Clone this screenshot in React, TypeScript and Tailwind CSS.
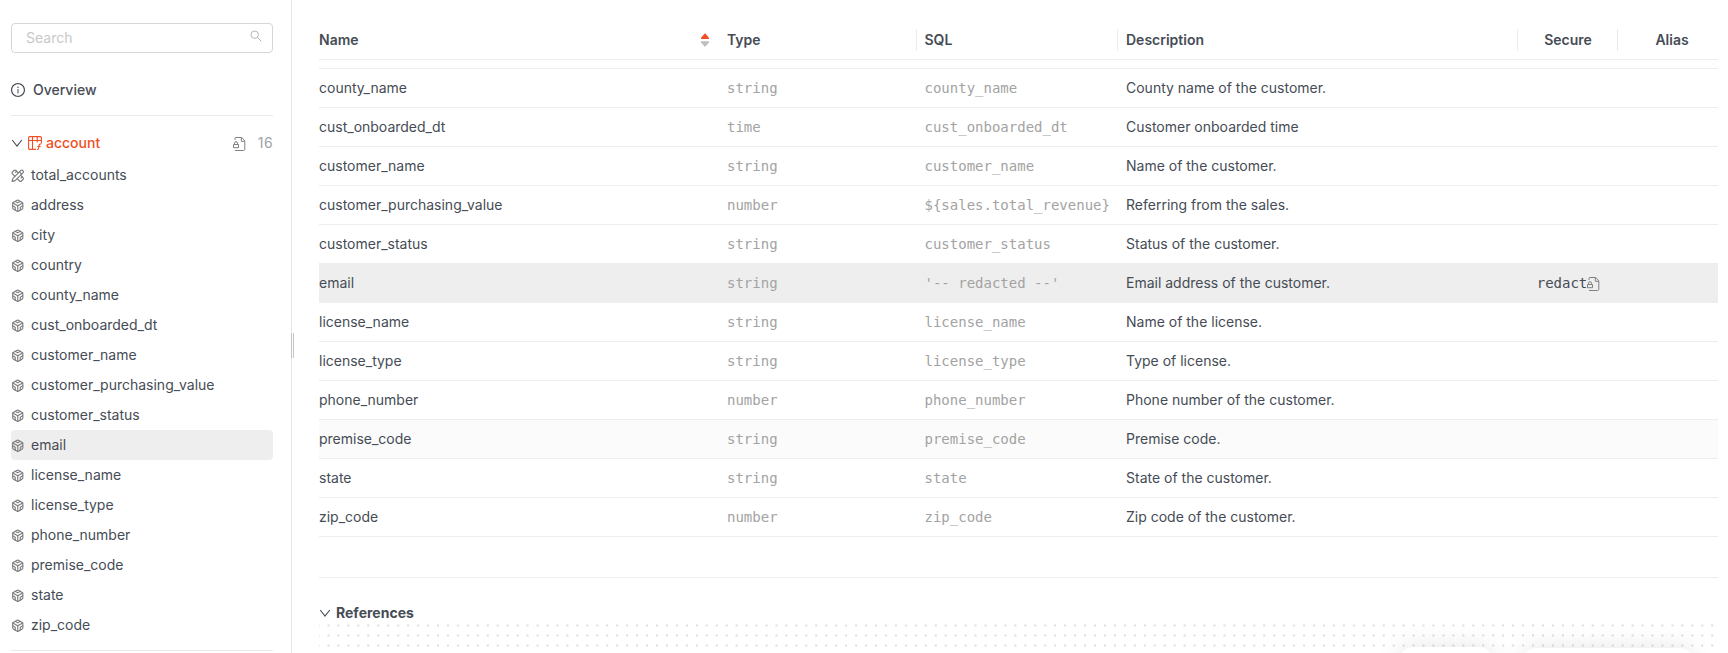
import React from "react";
import { Codesandbox, PencilRuler } from "lucide-react";
import { AiOutlineInfoCircle } from "react-icons/ai";

const measures = ["total_accounts"];
const dimensions = [
  "address", "city", "country", "county_name", "cust_onboarded_dt", "customer_name",
  "customer_purchasing_value", "customer_status", "email", "license_name", "license_type",
  "phone_number", "premise_code", "state", "zip_code",
];

type Row = { name: string; type: string; sql: string; desc: string; secure?: string; tone?: string };
const rows: Row[] = [
  { name: "county_name", type: "string", sql: "county_name", desc: "County name of the customer." },
  { name: "cust_onboarded_dt", type: "time", sql: "cust_onboarded_dt", desc: "Customer onboarded time" },
  { name: "customer_name", type: "string", sql: "customer_name", desc: "Name of the customer." },
  { name: "customer_purchasing_value", type: "number", sql: "${sales.total_revenue}", desc: "Referring from the sales." },
  { name: "customer_status", type: "string", sql: "customer_status", desc: "Status of the customer." },
  { name: "email", type: "string", sql: "'-- redacted --'", desc: "Email address of the customer.", secure: "redact", tone: "bg-[#eeeeee]" },
  { name: "license_name", type: "string", sql: "license_name", desc: "Name of the license." },
  { name: "license_type", type: "string", sql: "license_type", desc: "Type of license." },
  { name: "phone_number", type: "number", sql: "phone_number", desc: "Phone number of the customer." },
  { name: "premise_code", type: "string", sql: "premise_code", desc: "Premise code.", tone: "bg-[#fbfbfb]" },
  { name: "state", type: "string", sql: "state", desc: "State of the customer." },
  { name: "zip_code", type: "number", sql: "zip_code", desc: "Zip code of the customer." },
];

const COLS = "grid grid-cols-[400px_197.5px_201.500px_400px_100px_100px]";
const MONO = "font-['DejaVu_Sans_Mono',monospace]";

function Chevron() {
  return (
    <svg width="12" height="12" viewBox="0 0 12 12" fill="none" stroke="currentColor" strokeWidth="1.1" className="shrink-0">
      <path d="M1.200 3 6 9l4.800-6" />
    </svg>
  );
}

function SecureDoc() {
  return (
    <svg width="13" height="14" viewBox="0 0 13 14" fill="none" stroke="currentColor" strokeWidth="1" className="shrink-0 text-[#808080]">
      <path d="M2 3V1.500a1 1 0 0 1 1-1h5.800L11.800 3.800v8.400a1.300 1.300 0 0 1-1.300 1.300H2" />
      <path d="M8.300.8v3.500h3.300" />
      <path d="M.5 7.500h5v3.200H.5zM1.500 7.300V6.200a1.500 1.500 0 0 1 3 0v1.100" />
    </svg>
  );
}

function TableFx() {
  return (
    <svg width="14" height="14" viewBox="0 0 14 14" fill="none" stroke="currentColor" strokeWidth="1.1" className="shrink-0">
      <path d="M8 13.400H1.800A1.200 1.200 0 0 1 .6 12.200V1.800A1.200 1.200 0 0 1 1.800.6h10.400a1.200 1.200 0 0 1 1.200 1.200v5.700M.6 4.500h12.800M4.500.6v12.800M9.200.6v6" />
      <path d="M13.200 8.100c-1.400-.4-1.900.2-2.100 1.300l-.5 2.800c-.2 1-.6 1.400-1.500 1.200M9.400 10.500h3.200" />
    </svg>
  );
}

function SideItem({ label, kind }: { label: string; kind: "measure" | "dimension" }) {
  return (
    <li className={label === "email" ? "flex h-[30px] items-center rounded bg-[#eeeeee]" : "flex h-[30px] items-center rounded"}>
      <span className="mt-[2px] -ml-[0.5px] mr-[0.5px] flex w-5 shrink-0 text-[#7d7d7d]">
        {kind === "measure" ? <PencilRuler size={13.5} strokeWidth={2} /> : <Codesandbox size={13.5} strokeWidth={2} />}
      </span>
      <span>{label}</span>
    </li>
  );
}

function Sidebar() {
  return (
    <aside className="flex w-[292px] shrink-0 flex-col border-r border-[#e6e6e6] pr-[18px] pl-[11px] pt-[23px]">
      <div className="flex h-[30px] shrink-0 items-center justify-between rounded border border-[#d6d6d6] pr-[10px] pl-[14px] text-[#c8c8c8]">
        <span>Search</span>
        <svg width="12" height="12" viewBox="0 0 12 12" fill="none" stroke="#b5b5b5" strokeWidth="1" className="mb-1">
          <circle cx="4.700" cy="4.700" r="3.700" />
          <path d="m7.400 7.400 4 4" />
        </svg>
      </div>
      <div className="mt-[25px] flex h-6 shrink-0 items-center gap-[7px] font-medium">
        <AiOutlineInfoCircle size={16} className="-ml-px" />
        <span>Overview</span>
      </div>
      <div className="mt-[13px] h-px shrink-0 bg-[#ebebeb]" />
      <div className="mt-4 flex h-[22px] shrink-0 items-center">
        <Chevron />
        <span className="ml-[5px] flex items-center gap-1 font-medium text-[#f04e23]">
          <TableFx />
          account
        </span>
        <span className="ml-auto flex items-center gap-3 text-[#a0a4a8]">
          <span className="mt-[2px]"><SecureDoc /></span>
          <span className="tracking-[0.4px]">16</span>
        </span>
      </div>
      <ul className="mt-[6px] shrink-0">
        {measures.map((m) => <SideItem key={m} label={m} kind="measure" />)}
        {dimensions.map((d) => <SideItem key={d} label={d} kind="dimension" />)}
      </ul>
      <div className="mt-[10px] h-px shrink-0 bg-[#ebebeb]" />
    </aside>
  );
}

function HeaderCell({ label }: { label: string }) {
  return <div className="flex h-[22px] items-center border-r border-[#ebebeb] px-2">{label}</div>;
}

function FieldsTable() {
  return (
    <section>
      <div className={`${COLS} h-[60px] border-b border-[#eeeeee] pt-[29px] font-semibold`}>
        <div className="flex h-[22px] items-center justify-between pr-[10px]">
          <span>Name</span>
          <svg width="8" height="14" viewBox="0 0 8 14">
            <path d="M4 .3 8 4.800V6H0V4.800z" fill="#f04e23" />
            <path d="M0 8.300h8v1.200L4 14 0 9.500z" fill="#bfbfbf" />
          </svg>
        </div>
        <HeaderCell label="Type" />
        <HeaderCell label="SQL" />
        <HeaderCell label="Description" />
        <div className="flex h-[22px] items-center justify-center border-r border-[#ebebeb] pl-px">Secure</div>
        <div className="flex h-[22px] items-center justify-center pl-2">Alias</div>
      </div>
      <div className="h-[9px] border-b border-[#eeeeee]" />
      {rows.map((r) => (
        <div key={r.name} className={`${COLS} h-[39px] items-center border-b border-[#eeeeee] ${r.tone ?? ""}`}>
          <span>{r.name}</span>
          <span className={`${MONO} px-2 text-[#a3a3a3]`}>{r.type}</span>
          <span className={`${MONO} px-2 whitespace-nowrap text-[#a3a3a3]`}>{r.sql}</span>
          <span className="px-2">{r.desc}</span>
          <span className={`${MONO} flex items-center justify-center`}>
            {r.secure && <><span>{r.secure}</span><span className="mt-[2px] -mr-px"><SecureDoc /></span></>}
          </span>
          <span />
        </div>
      ))}
    </section>
  );
}

function References() {
  return (
    <section className="mt-10 border-t border-[#eeeeee]">
      <h2 className="flex h-[42px] items-end gap-[5px] font-bold">
        <span className="flex h-[14px] items-center"><Chevron /></span>
        <span className="leading-[14px]">References</span>
      </h2>
      <div className="relative h-[33px] overflow-hidden">
        <svg width="1399" height="33" className="block">
          <defs>
            <pattern id="dots" x="4.500" y="0.500" width="9.955" height="10" patternUnits="userSpaceOnUse">
              <circle cx="5" cy="5" r="0.650" fill="#a0a0a0" />
            </pattern>
          </defs>
          <rect width="1396" height="33" fill="url(#dots)" />
        </svg>
        <div className="absolute top-[27px] left-[1080px] h-10 w-[94px] rounded-[14px] bg-white shadow-[0_0_24px_rgba(0,0,0,0.1)]" />
        <div className="absolute top-[28px] left-[1203px] h-10 w-[172px] rounded-[14px] bg-white shadow-[0_0_24px_rgba(0,0,0,0.1)]" />
      </div>
    </section>
  );
}

export default function App() {
  return (
    <div className="flex h-[653px] w-[1728px] overflow-hidden bg-white font-['Inter',sans-serif] text-[14px] leading-[22px] text-[#464c55]">
      <Sidebar />
      <div className="flex w-[27px] shrink-0 items-center pt-[38px]">
        <div className="-ml-px h-[25px] w-[3px] border-x border-[#c4c4c4]" />
      </div>
      <main className="w-[1399px] shrink-0">
        <FieldsTable />
        <References />
      </main>
    </div>
  );
}
